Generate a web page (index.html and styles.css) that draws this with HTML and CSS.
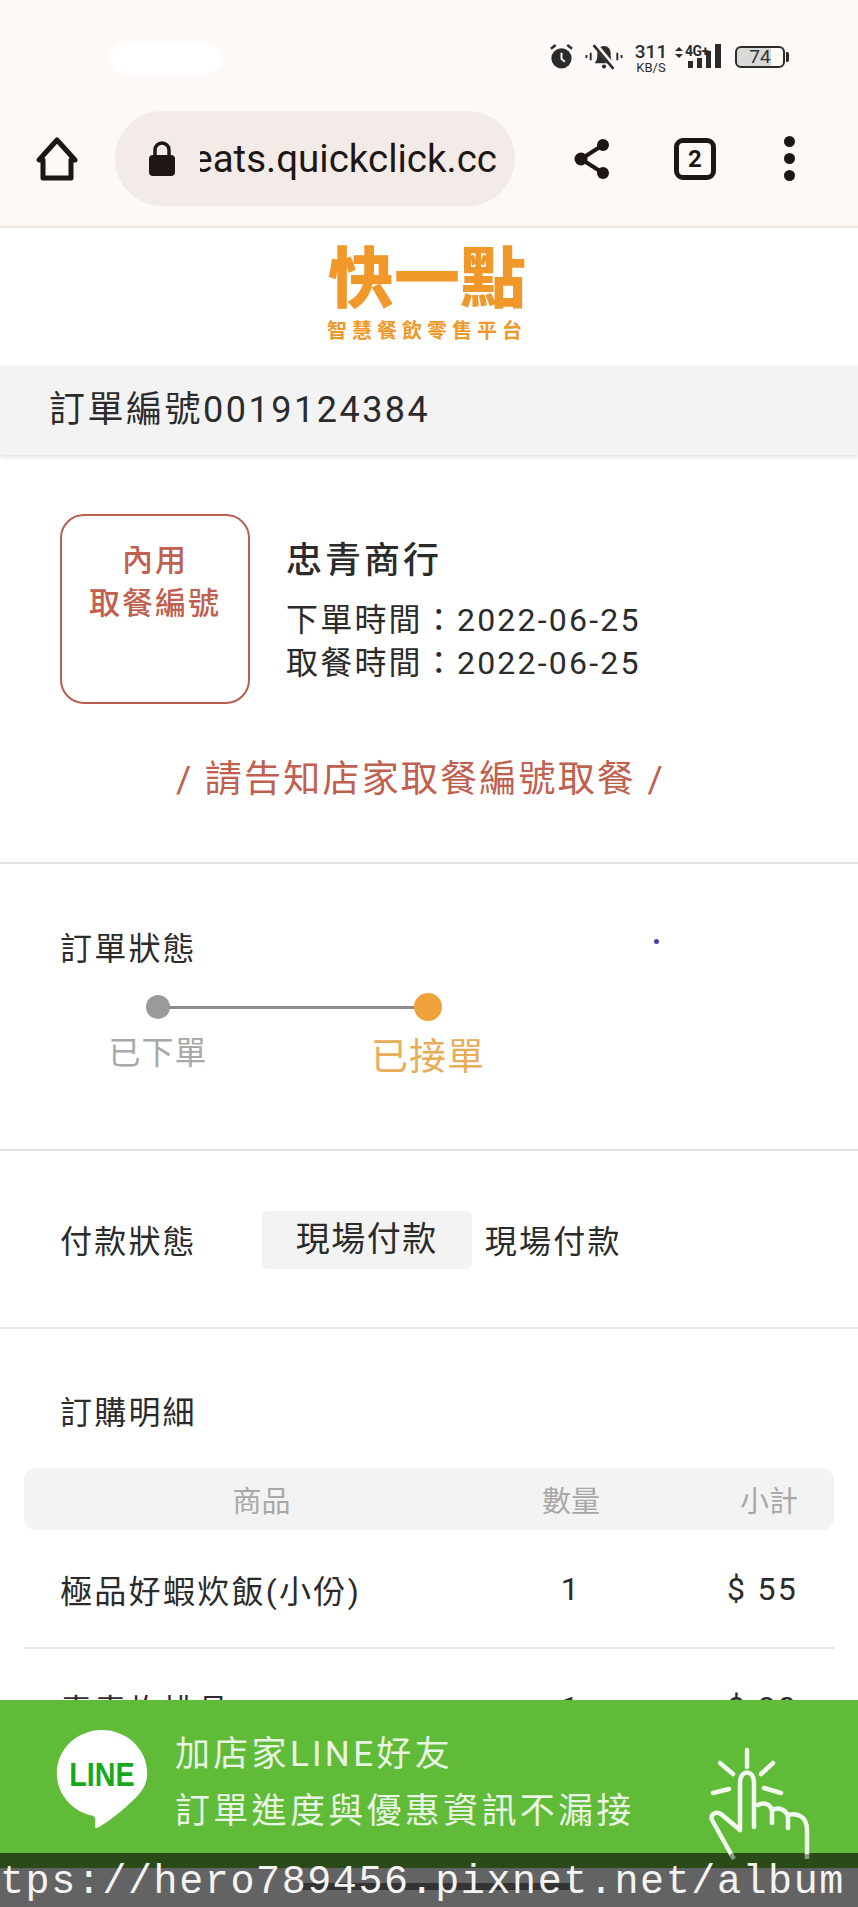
FILE: index.html
```html
<!DOCTYPE html>
<html lang="zh-Hant">

<head>
  <meta charset="UTF-8">
  <meta name="viewport" content="width=device-width, initial-scale=1.0">
  <title>訂單編號0019124384</title>
  <link rel="stylesheet" href="styles.css">
</head>

<body>
  <div class="page">
    <!-- Phone status bar and browser toolbar -->
    <header class="chrome">
      <div class="status-bar">
        <span class="status-blot"></span>
        <div class="status-icons">
          <svg class="ic-alarm" viewBox="0 0 26 28" width="25" height="27">
            <circle cx="13" cy="16" r="10.5" fill="#2b2b2b" />
            <path d="M2 6l5-4M24 6l-5-4" stroke="#2b2b2b" stroke-width="2.6" fill="none" />
            <path d="M13 10v6.5l3.5 3" stroke="#fdf9f6" stroke-width="2" fill="none" />
          </svg>
          <svg class="ic-bell" viewBox="0 0 40 28" width="38" height="27">
            <path d="M10 21c3-3 3-7 3-10 0-5 3-8 7-8s7 3 7 8c0 3 0 7 3 10z" fill="#2b2b2b" />
            <circle cx="20" cy="24.5" r="2.2" fill="#2b2b2b" />
            <path d="M10 1l21 25" stroke="#fdf9f6" stroke-width="5.5" />
            <path d="M9 2l21 25" stroke="#2b2b2b" stroke-width="2.6" />
            <path d="M1.5 12.5v3M6 10v8M34 10v8M38.5 12.5v3" stroke="#2b2b2b" stroke-width="2" />
          </svg>
          <div class="speed"><b>311</b><span>KB/S</span></div>
          <div class="signal">
            <span class="signal-type">4G+</span>
            <svg viewBox="0 0 50 28" width="50" height="28">
              <path d="M2 8l4-4 4 4zM2 11l4 4 4-4z" fill="#2b2b2b" />
              <rect x="15" y="18" width="5" height="7" fill="#2b2b2b" />
              <rect x="24" y="15" width="5" height="10" fill="#2b2b2b" />
              <rect x="33" y="8" width="5" height="17" fill="#2b2b2b" />
              <rect x="42" y="1" width="6" height="24" fill="#2b2b2b" />
            </svg>
          </div>
          <div class="battery"><span>74</span></div>
        </div>
      </div>
      <div class="toolbar">
        <svg class="ic-home" viewBox="0 0 46 46" width="46" height="46">
          <path d="M23 4L5 24h4v18h28V24h4z" fill="none" stroke="#1e1613" stroke-width="5" stroke-linejoin="round" />
        </svg>
        <div class="url-pill">
          <svg viewBox="0 0 28 36" width="28" height="36">
            <path d="M7 15V9a7 7 0 0 1 14 0v6" fill="none" stroke="#1e1613" stroke-width="3.4" />
            <rect x="1" y="14" width="26" height="21" rx="4" fill="#1e1613" />
          </svg>
          <div class="url-text"><span>eats.quickclick.cc</span></div>
        </div>
        <svg class="ic-share" viewBox="0 0 38 42" width="38" height="42">
          <path d="M30 7L8 21l22 14" fill="none" stroke="#1e1613" stroke-width="4" />
          <circle cx="30" cy="7" r="6" fill="#1e1613" />
          <circle cx="8" cy="21" r="6.5" fill="#1e1613" />
          <circle cx="30" cy="35" r="6" fill="#1e1613" />
        </svg>
        <div class="tabs-count">2</div>
        <div class="menu-dots"><i></i><i></i><i></i></div>
      </div>
    </header>

    <!-- Store logo -->
    <div class="logo">
      <div class="logo-name">快一點</div>
      <div class="logo-sub">智慧餐飲零售平台</div>
    </div>

    <div class="order-bar">訂單編號0019124384</div>

    <!-- Pickup info -->
    <section class="pickup">
      <div class="pickup-main">
        <div class="pickup-box">
          <span>內用</span>
          <span>取餐編號</span>
        </div>
        <div class="pickup-info">
          <h2 class="shop-name">忠青商行</h2>
          <p>下單時間：2022-06-25</p>
          <p>取餐時間：2022-06-25</p>
        </div>
      </div>
      <p class="pickup-note">/ 請告知店家取餐編號取餐 /</p>
    </section>

    <!-- Order status -->
    <section class="status">
      <h3 class="sec-title">訂單狀態</h3>
      <span class="stray-dot"></span>
      <div class="steps">
        <div class="step">
          <span class="step-dot"></span>
          <span class="step-label">已下單</span>
        </div>
        <div class="step step-active">
          <span class="step-dot"></span>
          <span class="step-label">已接單</span>
        </div>
      </div>
    </section>

    <!-- Payment -->
    <section class="payment">
      <h3 class="sec-title">付款狀態</h3>
      <span class="pay-chip">現場付款</span>
      <span class="pay-text">現場付款</span>
    </section>

    <!-- Order details -->
    <section class="details">
      <h3 class="sec-title">訂購明細</h3>
      <div class="table-head">
        <span class="col-name">商品</span>
        <span class="col-qty">數量</span>
        <span class="col-sum">小計</span>
      </div>
      <div class="table-row">
        <span class="col-name">極品好蝦炊飯(小份)</span>
        <span class="col-qty">1</span>
        <span class="col-sum">$ 55</span>
      </div>
      <div class="table-row">
        <span class="col-name">青青炸排骨</span>
        <span class="col-qty">1</span>
        <span class="col-sum">$ 80</span>
      </div>
    </section>

    <!-- Fixed LINE banner and the watermark over the bottom edge -->
    <footer class="bottom">
      <div class="line-banner">
        <svg class="line-logo" viewBox="0 0 96 104" width="94" height="100">
          <path d="M48 1C22 1 1 21 1 46c0 24 19 41 37 44 2 1 3 2 3 5 0 3-1 8 1 8 3 0 20-12 33-24 13-11 20-20 20-33C95 21 74 1 48 1z" fill="#fff" />
          <text x="48" y="59" text-anchor="middle" textLength="68" lengthAdjust="spacingAndGlyphs" class="line-word">LINE</text>
        </svg>
        <div class="line-text">
          <p>加店家LINE好友</p>
          <p>訂單進度與優惠資訊不漏接</p>
        </div>
      </div>
      <div class="shade"></div>
      <div class="watermark">
        <span class="nav-handle"></span>
        <span class="watermark-text">tps://hero789456.pixnet.net/album</span>
      </div>
      <svg class="hand" viewBox="0 0 140 140" width="140" height="140">
        <g fill="none" stroke="#f2f9ee" stroke-width="4.5" stroke-linecap="round" stroke-linejoin="round">
          <path d="M57 20v17M30 33l13 11M83 33L71 44M23 63l16-4M91 63l-17-5" />
          <path d="M41 124L22 90c-2-6 4-9 9-6l19 16V53c0-14 14-14 14 0v44" />
          <path d="M68 75c5-3 14-2 14 8v10M82 80c6-3 16-1 16 9v9M98 85c8-2 19 0 19 15v24" />
        </g>
        <path d="M41 124l3 5M117 124v5" stroke="#8a9a82" stroke-width="4.5" />
      </svg>
    </footer>
  </div>
</body>

</html>
```

FILE: styles.css
```css
* {
  box-sizing: border-box;
}

body {
  font-family: Roboto, "Noto Sans CJK TC", sans-serif;
  background-color: #fff;
  color: #2b2b2b;
  margin: 0;
  padding: 0;
}

h2,
h3,
p {
  margin: 0;
  font-weight: 400;
}

.page {
  position: relative;
  height: 1907px;
  overflow: hidden;
}

/* phone + browser chrome */
.chrome {
  height: 228px;
  background-color: #fdf9f6;
  border-bottom: 2px solid #eee7e2;
}

.status-bar {
  height: 111px;
  padding: 43px 73px 0 110px;
  display: flex;
  justify-content: space-between;
}

.status-blot {
  width: 112px;
  height: 30px;
  background-color: #fff;
  border-radius: 14px;
  filter: blur(2px);
}

.status-icons {
  display: flex;
  align-items: flex-start;
}

.ic-bell {
  margin-left: 11px;
}

.speed {
  width: 34px;
  margin-left: 11px;
  display: flex;
  flex-direction: column;
  align-items: center;
  color: #2b2b2b;
}

.speed b {
  font-size: 19px;
  font-weight: 500;
  line-height: 18px;
}

.speed span {
  font-size: 13px;
  line-height: 13px;
}

.signal {
  position: relative;
  width: 50px;
  margin-left: 5px;
}

.signal-type {
  position: absolute;
  left: 12px;
  top: 1px;
  font-size: 14px;
  font-weight: 700;
  letter-spacing: -0.5px;
  line-height: 14px;
}

.battery {
  position: relative;
  width: 50px;
  height: 22px;
  margin: 3px 0 0 12px;
  border: 2px solid #2b2b2b;
  border-radius: 6px;
  background: linear-gradient(90deg, #d9d9d7 74%, #fdf9f6 74%);
  font-size: 19px;
  line-height: 18px;
  text-align: center;
  color: #333;
}

.battery::after {
  content: "";
  position: absolute;
  right: -6px;
  top: 4px;
  width: 3px;
  height: 10px;
  border-radius: 0 2px 2px 0;
  background-color: #2b2b2b;
}

.toolbar {
  display: flex;
  align-items: center;
  height: 95px;
  padding-left: 34px;
}

.url-pill {
  width: 400px;
  height: 95px;
  margin-left: 35px;
  padding: 0 18px 0 33px;
  display: flex;
  align-items: center;
  gap: 24px;
  background-color: #f2ebe7;
  border-radius: 48px;
}

.url-text {
  flex: 1;
  min-width: 0;
  display: flex;
  justify-content: flex-end;
  overflow: hidden;
  white-space: nowrap;
  font-size: 38.5px;
  color: #1e1613;
}

.ic-share {
  margin-left: 58px;
}

.tabs-count {
  width: 42px;
  height: 42px;
  margin-left: 63px;
  border: 5px solid #1e1613;
  border-radius: 9px;
  font-size: 24px;
  font-weight: 700;
  line-height: 32px;
  text-align: center;
  color: #1e1613;
}

.menu-dots {
  margin-left: 68px;
  display: flex;
  flex-direction: column;
  gap: 6px;
}

.menu-dots i {
  width: 11px;
  height: 11px;
  border-radius: 50%;
  background-color: #1e1613;
}

/* logo */
.logo {
  height: 138px;
  display: flex;
  flex-direction: column;
  align-items: center;
  padding: 14px 4px 0 0;
  color: #f0982a;
}

.logo-name {
  font-size: 66px;
  font-weight: 900;
  line-height: 76px;
}

.logo-sub {
  font-size: 20px;
  font-weight: 700;
  letter-spacing: 5px;
  line-height: 26px;
}

.order-bar {
  height: 89px;
  padding-left: 49px;
  background-color: #f3f3f3;
  box-shadow: 0 2px 5px rgba(0, 0, 0, 0.12);
  font-size: 36px;
  letter-spacing: 2.5px;
  line-height: 89px;
}

/* sections */
section {
  position: relative;
  border-bottom: 2px solid #e4e4e4;
}

.sec-title {
  font-size: 32px;
  letter-spacing: 2.2px;
  line-height: 44px;
}

.pickup {
  height: 409px;
  padding: 59px 0 0 60px;
}

.pickup-main {
  display: flex;
  align-items: flex-start;
  gap: 36px;
}

.pickup-box {
  width: 190px;
  height: 190px;
  padding-top: 23px;
  display: flex;
  flex-direction: column;
  align-items: center;
  border: 2px solid #b8604f;
  border-radius: 24px;
  color: #c0604f;
  font-size: 31px;
  font-weight: 500;
  letter-spacing: 2px;
  line-height: 43px;
}

.pickup-info {
  padding-top: 22px;
  font-size: 32px;
  letter-spacing: 2.2px;
  line-height: 43px;
}

.shop-name {
  margin-bottom: 13px;
  font-size: 36px;
  font-weight: 500;
  letter-spacing: 3px;
  line-height: 50px;
}

.pickup-note {
  margin: 51px 0 0 116px;
  color: #c0604f;
  font-size: 37px;
  letter-spacing: 2.2px;
  line-height: 50px;
}

.status {
  height: 287px;
  padding: 63px 0 0 60px;
}

.stray-dot {
  position: absolute;
  left: 654px;
  top: 75px;
  width: 5px;
  height: 5px;
  border-radius: 50%;
  background-color: #4a3fa8;
}

.steps {
  position: relative;
  margin-top: 21px;
  margin-left: 40px;
  display: flex;
  gap: 154px;
}

.steps::before {
  content: "";
  position: absolute;
  left: 58px;
  top: 14px;
  width: 270px;
  height: 3px;
  background-color: #8d8d8d;
}

.step {
  position: relative;
  width: 116px;
  display: flex;
  flex-direction: column;
  align-items: center;
  color: #a8a8a8;
  font-size: 32px;
  letter-spacing: 1px;
}

.step-dot {
  width: 24px;
  height: 24px;
  margin: 3px 0 12px;
  border-radius: 50%;
  background-color: #9a9a9a;
}

.step-label {
  line-height: 44px;
}

.step-active {
  color: #e9ac58;
  font-size: 37px;
}

.step-active .step-dot {
  width: 28px;
  height: 28px;
  margin: 1px 0 15px;
  background-color: #f0a33c;
}

.payment {
  height: 178px;
  padding: 60px 0 0 60px;
  display: flex;
  align-items: flex-start;
}

.payment .sec-title {
  margin-top: 9px;
}

.pay-chip {
  width: 210px;
  height: 58px;
  margin-left: 65px;
  background-color: #f3f3f3;
  border-radius: 6px;
  font-size: 34px;
  letter-spacing: 1.5px;
  line-height: 56px;
  text-align: center;
}

.pay-text {
  margin: 9px 0 0 13px;
  font-size: 32px;
  letter-spacing: 2.2px;
  line-height: 44px;
}

.details {
  border-bottom: 0;
  padding: 62px 24px 0;
}

.details .sec-title {
  margin-left: 36px;
}

.table-head,
.table-row {
  display: flex;
  align-items: center;
  padding: 0 36px;
}

.table-head {
  height: 62px;
  margin-top: 33px;
  background-color: #f3f3f3;
  border-radius: 12px;
  color: #a8a8a8;
  font-size: 29px;
}

.table-row {
  height: 119px;
  border-bottom: 2px solid #e4e4e4;
  font-size: 32px;
  letter-spacing: 2.3px;
}

.col-name {
  width: 461px;
}

.col-qty {
  width: 100px;
  text-align: center;
}

.col-sum {
  flex: 1;
  text-align: right;
}

.table-head .col-name {
  padding-right: 58px;
  text-align: center;
}

/* bottom banner */
.bottom {
  position: absolute;
  left: 0;
  right: 0;
  bottom: 0;
}

.line-banner {
  height: 153px;
  padding: 29px 0 0 55px;
  display: flex;
  align-items: flex-start;
  gap: 26px;
  background-color: #5fbb38;
}

.line-word {
  font-family: "Liberation Sans", sans-serif;
  font-size: 34px;
  font-weight: 700;
  fill: #17a81c;
}

.line-text {
  margin-top: -3px;
  color: #e9f5e3;
  font-size: 35px;
  letter-spacing: 3.3px;
  line-height: 57px;
}

.shade {
  height: 15px;
  background-color: #2a4b17;
}

.watermark {
  position: relative;
  height: 39px;
  background-color: #636363;
}

.nav-handle {
  position: absolute;
  left: 300px;
  top: 15px;
  width: 270px;
  height: 7px;
  background-color: #333;
}

.watermark-text {
  position: relative;
  top: -5px;
  display: block;
  font-family: "Liberation Mono", monospace;
  font-size: 40px;
  letter-spacing: 1.6px;
  line-height: 39px;
  white-space: nowrap;
  color: #f4f4f4;
}

.hand {
  position: absolute;
  left: 690px;
  top: 30px;
}
```
